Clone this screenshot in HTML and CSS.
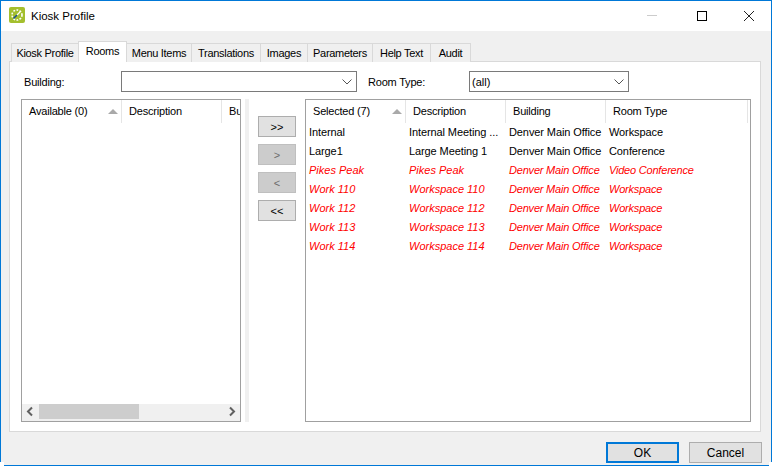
FILE: index.html
```html
<!DOCTYPE html>
<html lang="en">

<head>
	<meta charset="UTF-8" />
	<title>Kiosk Profile</title>
	<link rel="stylesheet" href="styles.css">
</head>

<body>
	<div class="window">
		<!-- title bar -->
		<div class="titlebar">
			<svg class="app-icon" width="16" height="16" viewBox="0 0 16 16">
				<rect width="16" height="16" rx="2" fill="#a4bf2e" />
				<circle cx="8" cy="8" r="5" fill="none" stroke="#fff" stroke-width="1.6" stroke-dasharray="1.8 1.4" />
				<path d="M4.5 11.5 L8 8" stroke="#1f4f8f" stroke-width="1.6" />
				<path d="M8 8 L11 5" stroke="#fff" stroke-width="1.2" />
			</svg>
			<span class="title">Kiosk Profile</span>
			<div class="caption-buttons">
				<svg class="caption-btn" width="46" height="30" viewBox="0 0 46 30">
					<path d="M13 14.5 H23" stroke="#ccc" />
				</svg>
				<svg class="caption-btn" width="46" height="30" viewBox="0 0 46 30">
					<rect x="17.5" y="10.5" width="9" height="9" fill="none" stroke="#000" />
				</svg>
				<svg class="caption-btn" width="46" height="30" viewBox="0 0 46 30">
					<path d="M18 10 L28 20 M28 10 L18 20" stroke="#222" fill="none" />
				</svg>
			</div>
		</div>

		<div class="client">
			<!-- tabs -->
			<ul class="tabs">
				<li class="tab tab-kiosk">Kiosk Profile</li>
				<li class="tab tab-rooms active">Rooms</li>
				<li class="tab tab-menu">Menu Items</li>
				<li class="tab tab-trans">Translations</li>
				<li class="tab tab-images">Images</li>
				<li class="tab tab-params">Parameters</li>
				<li class="tab tab-help">Help Text</li>
				<li class="tab tab-audit">Audit</li>
			</ul>

			<div class="panel">
				<div class="filters">
					<label class="filter-label building-label">Building:</label>
					<div class="combo building-combo">
						<span></span>
						<svg width="10" height="6" viewBox="0 0 10 6"><path d="M.5 .5 L5 5 L9.5 .5" fill="none" stroke="#555" /></svg>
					</div>
					<label class="filter-label type-label">Room Type:</label>
					<div class="combo type-combo">
						<span>(all)</span>
						<svg width="10" height="6" viewBox="0 0 10 6"><path d="M.5 .5 L5 5 L9.5 .5" fill="none" stroke="#555" /></svg>
					</div>
				</div>

				<div class="lists">
					<div class="list list-available">
						<div class="list-head">
							<div class="col col-first">Available (0)<span class="sort"></span></div>
							<div class="col">Description</div>
							<div class="col col-cut">Bu</div>
						</div>
						<div class="list-body"></div>
						<div class="hscroll">
							<svg width="17" height="15" viewBox="0 0 17 15"><path d="M10 3.5 L6 7.5 L10 11.5" fill="none" stroke="#606060" stroke-width="2" /></svg>
							<div class="hscroll-track"><div class="hscroll-thumb"></div></div>
							<svg width="17" height="15" viewBox="0 0 17 15"><path d="M7 3.5 L11 7.5 L7 11.5" fill="none" stroke="#606060" stroke-width="2" /></svg>
						</div>
					</div>

					<div class="splitter"></div>

					<div class="move-buttons">
						<button class="move">&gt;&gt;</button>
						<button class="move off">&gt;</button>
						<button class="move off">&lt;</button>
						<button class="move">&lt;&lt;</button>
					</div>

					<div class="list list-selected">
						<div class="list-head">
							<div class="col col-first">Selected (7)<span class="sort"></span></div>
							<div class="col">Description</div>
							<div class="col">Building</div>
							<div class="col col-last">Room Type</div>
						</div>
						<div class="list-body">
							<div class="row"><span>Internal</span><span>Internal Meeting ...</span><span>Denver Main Office</span><span>Workspace</span></div>
							<div class="row"><span>Large1</span><span>Large Meeting 1</span><span>Denver Main Office</span><span>Conference</span></div>
							<div class="row bad"><span>Pikes Peak</span><span>Pikes Peak</span><span>Denver Main Office</span><span>Video Conference</span></div>
							<div class="row bad"><span>Work 110</span><span>Workspace 110</span><span>Denver Main Office</span><span>Workspace</span></div>
							<div class="row bad"><span>Work 112</span><span>Workspace 112</span><span>Denver Main Office</span><span>Workspace</span></div>
							<div class="row bad"><span>Work 113</span><span>Workspace 113</span><span>Denver Main Office</span><span>Workspace</span></div>
							<div class="row bad"><span>Work 114</span><span>Workspace 114</span><span>Denver Main Office</span><span>Workspace</span></div>
						</div>
					</div>
				</div>
			</div>

			<div class="footer">
				<button class="dlg default">OK</button>
				<button class="dlg">Cancel</button>
			</div>
		</div>
	</div>
</body>

</html>
```

FILE: styles.css
```css
* {
	box-sizing: border-box;
}

html,
body {
	margin: 0;
	padding: 0;
	background-color: #fff;
}

body {
	width: 772px;
	height: 466px;
	overflow: hidden;
	font-family: "Liberation Sans", Arial, sans-serif;
	font-size: 11px;
	color: #000;
}

.window {
	width: 772px;
	height: 466px;
	display: flex;
	flex-direction: column;
	position: relative;
	border-top: 1px solid #0078d7;
	border-left: 1px solid #0078d7;
	border-right: 1px solid #0078d7;
}

/* the screenshot's rounded-off window corners */
.window::before,
.window::after {
	content: "";
	position: absolute;
	bottom: 0;
	height: 4px;
	background-color: #fff;
}

.window::before {
	left: -1px;
	width: 4px;
}

.window::after {
	right: -1px;
	width: 3px;
}

.titlebar {
	height: 30px;
	display: flex;
	align-items: center;
	flex: none;
	background-color: #fff;
}

.app-icon {
	margin: -2px 0 0 8px;
}

.title {
	margin-left: 6px;
	font-size: 11.5px;
}

.caption-buttons {
	margin-left: auto;
	margin-right: -1px;
	display: flex;
}

.client {
	flex: 1;
	display: flex;
	flex-direction: column;
	background-color: #f0f0f0;
	border-bottom: 1px solid #0078d7;
	padding: 10px 9px 0 8px;
}

.tabs {
	list-style-type: none;
	margin: 0 0 -1px 0;
	padding: 0 0 0 2px;
	display: flex;
	align-items: flex-end;
	height: 21px;
	position: relative;
	z-index: 1;
}

.tab {
	height: 19px;
	line-height: 18px;
	text-align: center;
	white-space: nowrap;
	letter-spacing: -0.3px;
	border: 1px solid #d9d9d9;
	border-bottom: none;
	border-left: none;
	background-color: #f0f0f0;
}

.tab-kiosk {
	width: 68px;
	border-left: 1px solid #d9d9d9;
}

.tab-rooms {
	width: 48px;
}

.tab-menu {
	width: 65px;
}

.tab-trans {
	width: 69px;
}

.tab-images {
	width: 47px;
}

.tab-params {
	width: 65px;
}

.tab-help {
	width: 58px;
}

.tab-audit {
	width: 40px;
}

.tab.active {
	height: 21px;
	line-height: 18px;
	background-color: #fff;
	border-left: 1px solid #d9d9d9;
	margin-left: -1px;
	width: 49px;
}

.panel {
	width: 752px;
	height: 371px;
	background-color: #fff;
	border: 1px solid #d9d9d9;
	padding: 9px 9px 9px 11px;
}

.filters {
	display: flex;
	align-items: center;
	height: 21px;
}

.filter-label {
	flex: none;
	letter-spacing: -0.2px;
}

.building-label {
	width: 100px;
	padding-left: 3px;
}

.type-label {
	width: 101px;
	margin-left: 11px;
}

.combo {
	height: 21px;
	border: 1px solid #7a7a7a;
	display: flex;
	align-items: center;
	justify-content: space-between;
	padding: 0 4px 0 2px;
	background-color: #fff;
	flex: none;
}

.building-combo {
	width: 236px;
}

.type-combo {
	width: 160px;
}

.lists {
	display: flex;
	margin-top: 7px;
	height: 323px;
}

.list {
	border: 1px solid #a0a0a0;
	background-color: #fff;
	display: flex;
	flex-direction: column;
	flex: none;
}

.list-available {
	width: 220px;
}

.list-selected {
	width: 446px;
}

.list-head {
	height: 23px;
	display: flex;
	flex: none;
	overflow: hidden;
	letter-spacing: -0.2px;
}

.col {
	width: 100px;
	flex: none;
	padding: 5px 0 0 7px;
	border-right: 1px solid #e5e5e5;
	position: relative;
}

.col-last {
	width: 142px;
}

.col-cut {
	border-right: none;
}

.sort {
	position: absolute;
	right: 3px;
	top: 9px;
	border-left: 5px solid transparent;
	border-right: 5px solid transparent;
	border-bottom: 5px solid #a9a9a9;
}

.list-body {
	flex: 1;
	margin-top: -1px;
}

.row {
	height: 19px;
	display: flex;
	align-items: center;
	letter-spacing: -0.1px;
}

.row span {
	width: 100px;
	flex: none;
	padding-left: 3px;
	white-space: nowrap;
}

.row.bad {
	color: #f00;
	font-style: italic;
	letter-spacing: 0;
}

.row.bad span:nth-child(3),
.row.bad span:nth-child(4) {
	letter-spacing: -0.2px;
}

.hscroll {
	height: 17px;
	display: flex;
	flex: none;
	background-color: #f0f0f0;
}

.hscroll-track {
	flex: 1;
}

.hscroll-thumb {
	width: 100px;
	height: 15px;
	background-color: #cdcdcd;
}

.splitter {
	width: 4px;
	margin-left: 4px;
	flex: none;
	background-color: #f0f0f0;
}

.move-buttons {
	width: 38px;
	margin: 17px 9px 0 9px;
	display: flex;
	flex-direction: column;
	gap: 7px;
	flex: none;
}

button {
	font-family: "Liberation Sans", Arial, sans-serif;
	font-size: 11px;
	color: #000;
	padding: 0;
}

.move {
	height: 21px;
	background-color: #e1e1e1;
	border: 1px solid #adadad;
}

.move.off {
	background-color: #ccc;
	color: #6d6d6d;
	border-color: #bfbfbf;
}

.footer {
	display: flex;
	justify-content: flex-end;
	gap: 10px;
	padding: 10px 0 0 0;
}

.dlg {
	width: 73px;
	height: 21px;
	font-size: 12px;
	background-color: #e1e1e1;
	border: 1px solid #adadad;
}

.dlg.default {
	border: 2px solid #0078d7;
}
```
